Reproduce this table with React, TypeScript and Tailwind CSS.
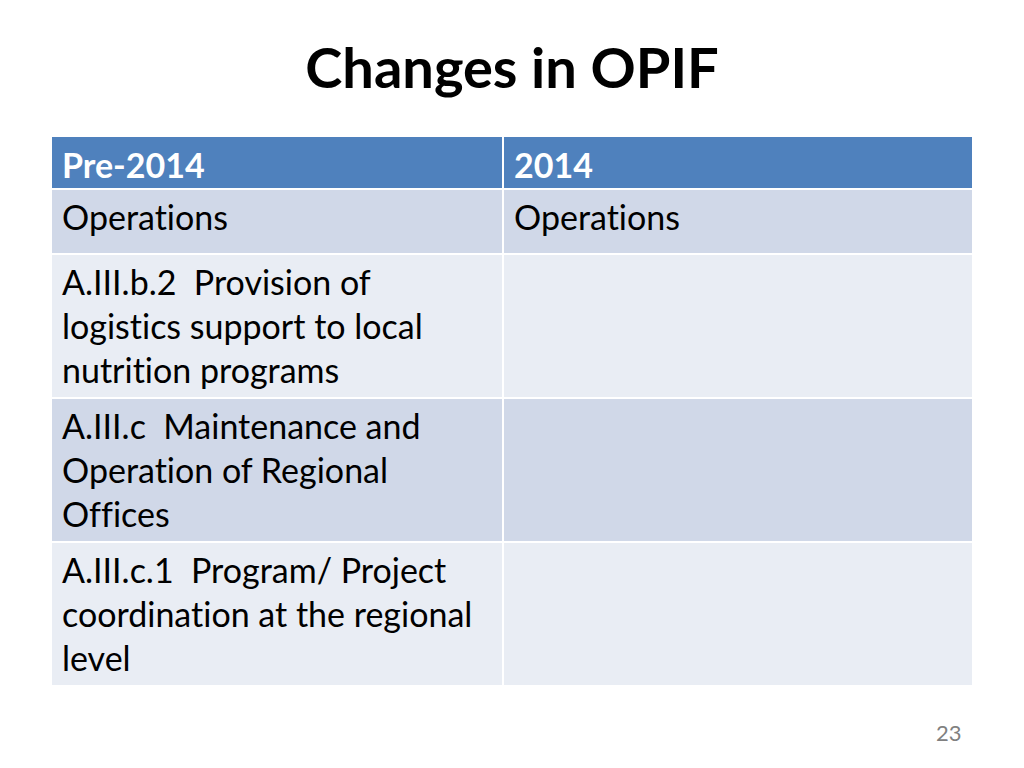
const rows = [
  { left: "Operations", right: "Operations", height: "h-[63px]", tone: "bg-[#d0d8e8]" },
  {
    left: "A.III.b.2  Provision of logistics support to local nutrition programs",
    right: "",
    height: "h-[142px]",
    tone: "bg-[#e9edf4]",
  },
  {
    left: "A.III.c  Maintenance and Operation of Regional Offices",
    right: "",
    height: "h-[142px]",
    tone: "bg-[#d0d8e8]",
  },
  {
    left: "A.III.c.1  Program/ Project coordination at the regional level",
    right: "",
    height: "h-[142px]",
    tone: "bg-[#e9edf4]",
  },
];

export default function App() {
  return (
    <main className="relative h-[768px] w-[1024px] bg-white font-['Lato','Open_Sans',sans-serif] text-black [font-variant-ligatures:none]">
      <h1 className="pt-[32px] text-center text-[56px] font-bold leading-[70px]">Changes in OPIF</h1>

      <div className="ml-[52px] mt-[35px] grid w-[920px] grid-cols-[450px_468px] gap-[2px]">
        <div className="h-[51px] bg-[#4f81bd] px-[10px] pt-[6px] text-[34px] font-bold leading-[44px] text-white">Pre-2014</div>
        <div className="h-[51px] bg-[#4f81bd] px-[10px] pt-[6px] text-[34px] font-bold leading-[44px] text-white">2014</div>

        {rows.map((row) => (
          <div key={row.left} className="contents">
            <div className={`${row.height} ${row.tone} px-[10px] pt-[5px] text-[34px] leading-[44px] whitespace-pre-wrap`}>{row.left}</div>
            <div className={`${row.height} ${row.tone} px-[10px] pt-[5px] text-[34px] leading-[44px]`}>{row.right}</div>
          </div>
        ))}
      </div>

      <div className="absolute left-[936px] top-[720px] text-[22px] leading-[26px] text-[#808080]">23</div>
    </main>
  );
}
